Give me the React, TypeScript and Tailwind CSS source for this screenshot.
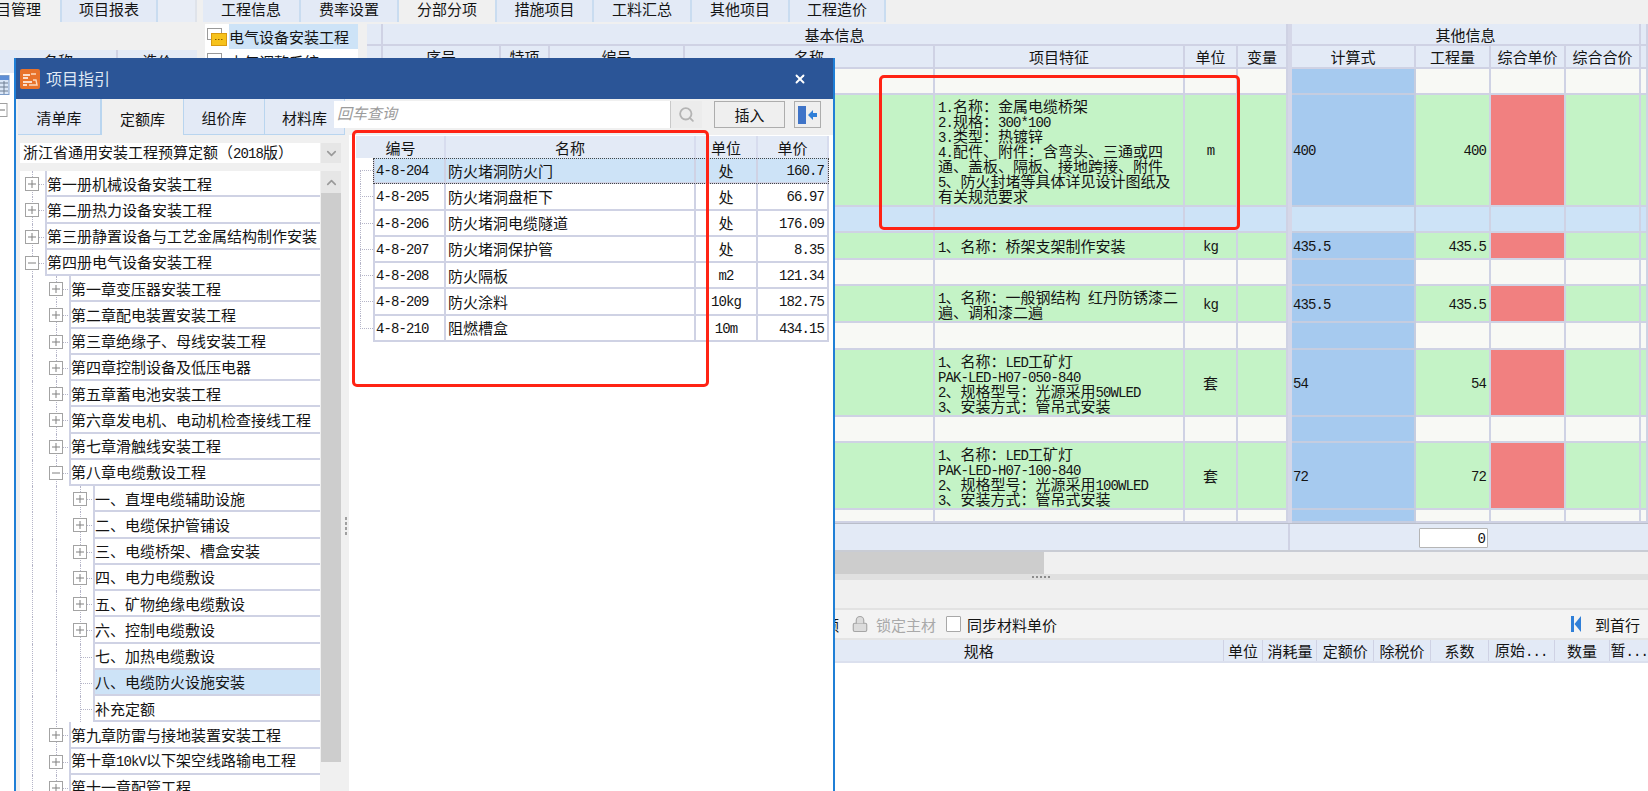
import { Lock, Search, X, ChevronDown, ChevronUp } from 'lucide-react';

const COLS = 'grid grid-cols-[16px_118px_49px_135px_250px_250px_53px_50px_4px_124px_75px_75px_75px_7px]';
const LINE = 'border-[#cfd2e4]';

// digits and latin are half width in the original font, so they get their own run
function T({ children }: { children: string }) {
  const parts = children.split(/([\x20-\x7e]+)/);
  return (
    <span>
      {parts.map((p, i) =>
        /^[\x20-\x7e]+$/.test(p) ? (
          <span key={i} className="font-['Liberation_Mono',monospace] text-[14px] tracking-[-0.9px]">
            {p}
          </span>
        ) : (
          p
        ),
      )}
    </span>
  );
}

interface Row {
  h: string;
  kind: 'white' | 'green' | 'sel';
  lines?: string[];
  unit?: string;
  calc?: string;
}

const rows: Row[] = [
  { h: 'h-[26px]', kind: 'white' },
  {
    h: 'h-[112px]',
    kind: 'green',
    lines: [
      '1.名称：金属电缆桥架',
      '2.规格：300*100',
      '3.类型：热镀锌',
      '4.配件、附件：含弯头、三通或四',
      '通、盖板、隔板、接地跨接、附件',
      '5、防火封堵等具体详见设计图纸及',
      '有关规范要求',
    ],
    unit: 'm',
    calc: '400',
  },
  { h: 'h-[26px]', kind: 'sel' },
  { h: 'h-[27px]', kind: 'green', lines: ['1、名称：桥架支架制作安装'], unit: 'kg', calc: '435.5' },
  { h: 'h-[26px]', kind: 'white' },
  {
    h: 'h-[37px]',
    kind: 'green',
    lines: ['1、名称：一般钢结构 红丹防锈漆二', '遍、调和漆二遍'],
    unit: 'kg',
    calc: '435.5',
  },
  { h: 'h-[27px]', kind: 'white' },
  {
    h: 'h-[67px]',
    kind: 'green',
    lines: ['1、名称：LED工矿灯', 'PAK-LED-H07-050-840', '2、规格型号：光源采用50WLED', '3、安装方式：管吊式安装'],
    unit: '套',
    calc: '54',
  },
  { h: 'h-[26px]', kind: 'white' },
  {
    h: 'h-[67px]',
    kind: 'green',
    lines: ['1、名称：LED工矿灯', 'PAK-LED-H07-100-840', '2、规格型号：光源采用100WLED', '3、安装方式：管吊式安装'],
    unit: '套',
    calc: '72',
  },
  { h: 'h-[13px]', kind: 'white' },
];

function GridRow({ row }: { row: Row }) {
  const bg = row.kind === 'green' ? 'bg-[#c4f3c6]' : row.kind === 'sel' ? 'bg-[#cde3f7]' : 'bg-[#f8f9f5]';
  const cell = `border-r-2 border-b-2 ${LINE} ${bg}`;
  const calcBg = row.kind === 'sel' ? 'bg-[#cde3f7]' : 'bg-[#a6caef]';
  const priceBg = row.kind === 'green' ? 'bg-[#f18080]' : bg;
  return (
    <div className={`${COLS} ${row.h}`}>
      <div className={cell} />
      <div className={cell} />
      <div className={cell} />
      <div className={cell} />
      <div className={cell} />
      <div className={`${cell} flex flex-col justify-center pl-[3px] whitespace-nowrap`}>
        {row.lines?.map((l) => (
          <div key={l} className="h-[15px] leading-[15px]">
            <T>{l}</T>
          </div>
        ))}
      </div>
      <div className={`${cell} flex items-center justify-center`}>{row.unit && <T>{row.unit}</T>}</div>
      <div className={cell} />
      <div className="bg-[#d5d7e8]" />
      <div className={`border-r-2 border-b-2 border-[#c5cde0] ${calcBg} flex items-center pl-[1px]`}>
        {row.calc && <T>{row.calc}</T>}
      </div>
      <div className={`${cell} flex items-center justify-end pr-[3px]`}>{row.calc && <T>{row.calc}</T>}</div>
      <div className={`border-r-2 border-b-2 ${LINE} ${priceBg}`} />
      <div className={cell} />
      <div className={cell} />
    </div>
  );
}

function TopTab({ label, active, w }: { label: string; active?: boolean; w: string }) {
  return (
    <div
      className={`${w} h-[22px] pb-[6px] flex items-center justify-center border-r-2 border-[#c9dcf0] ${
        active ? 'bg-[#f0f0f0]' : 'bg-[#e3eaf6]'
      }`}
    >
      {label}
    </div>
  );
}

function HeadCell({ label, className = '' }: { label?: string; className?: string }) {
  return (
    <div className={`bg-[#e3eaf6] border-r-2 border-b-2 ${LINE} flex items-center justify-center whitespace-nowrap ${className}`}>
      {label}
    </div>
  );
}

function Background() {
  return (
    <div className="flex h-full bg-[#f0f0f0]">
      {/* far left panel, mostly under the dialog */}
      <div className="w-[197px] shrink-0 flex flex-col">
        <div className="flex h-[22px]">
          <div className="w-[62px] pb-[6px] pr-[19px] flex items-center justify-end whitespace-nowrap bg-[#f0f0f0] border-r-2 border-[#c9dcf0]">
            项目管理
          </div>
          <TopTab label="项目报表" w="w-[96px]" />
          <div className="flex-1 bg-[#e8edf6] border-r-2 border-[#dfe3ea]" />
        </div>
        <div className="h-[28px] bg-[#f0f0f0]" />
        <div className="h-[23px] flex bg-[#e3eaf6]">
          <div className="w-[118px] pt-[3px] text-center border-r-2 border-[#cfd2e4]">名称</div>
          <div className="flex-1 pt-[3px] text-center">造价</div>
        </div>
        <div className="flex-1 bg-white pt-[2px] flex flex-col gap-[8px]">
          <svg width="10" height="20" viewBox="0 0 10 20">
            <rect x="-8" y="0.5" width="17" height="19" fill="#dbe7f7" stroke="#7c9cc8" />
            <rect x="-8" y="1" width="17" height="4" fill="#5f8fd6" />
            <path d="M0 8h8M0 12h8M0 16h8M4 6v13" stroke="#6f7f93" strokeWidth="1" />
          </svg>
          <svg width="8" height="14" viewBox="0 0 8 14">
            <rect x="-6" y="0.5" width="13" height="13" fill="#fff" stroke="#a0a0a0" />
            <path d="M0 7h5" stroke="#707070" />
          </svg>
        </div>
      </div>

      <div className="flex-1 pl-[6px] flex flex-col min-w-0">
        <div className="flex h-[22px]">
          <TopTab label="工程信息" w="w-[98px]" />
          <TopTab label="费率设置" w="w-[98px]" />
          <TopTab label="分部分项" w="w-[98px]" active />
          <TopTab label="措施项目" w="w-[97px]" />
          <TopTab label="工料汇总" w="w-[98px]" />
          <TopTab label="其他项目" w="w-[98px]" />
          <TopTab label="工程造价" w="w-[96px]" />
        </div>

        <div className="flex pt-[2px] pl-[2px]">
          {/* project tree */}
          <div className="w-[153px] h-[550px] bg-white">
            <div className="flex h-[25px]">
              <svg width="24" height="25" viewBox="0 0 24 25">
                <rect x="2.5" y="4.5" width="14" height="11" fill="#fff" stroke="#9a9a9a" />
                <rect x="6.5" y="9.5" width="15" height="12" fill="#f6c21c" stroke="#d99a10" />
                <path d="M10 15.5h1.5M13 15.5h1.5M16 15.5h1.5" stroke="#8a5a00" />
              </svg>
              <div className="flex-1 bg-[#cde3f7] flex items-center whitespace-nowrap overflow-hidden">电气设备安装工程</div>
            </div>
            <div className="flex h-[25px]">
              <svg width="24" height="25" viewBox="0 0 24 25">
                <rect x="2.5" y="4.5" width="14" height="11" fill="#fff" stroke="#9a9a9a" />
              </svg>
              <div className="flex-1 flex items-center whitespace-nowrap overflow-hidden">电气调整系统</div>
            </div>
          </div>
          <div className="w-[9px]" />

          {/* main grid */}
          <div className="w-[1281px] flex flex-col">
            <div className={`${COLS} h-[22px]`}>
              <HeadCell />
              <HeadCell label="基本信息" className="col-span-7" />
              <div className="bg-[#d5d7e8]" />
              <HeadCell label="其他信息" className="col-span-4" />
              <HeadCell />
            </div>
            <div className={`${COLS} h-[23px]`}>
              <HeadCell />
              <HeadCell label="序号" />
              <HeadCell label="特项" />
              <HeadCell label="编号" />
              <HeadCell label="名称" />
              <HeadCell label="项目特征" />
              <HeadCell label="单位" />
              <HeadCell label="变量" />
              <div className="bg-[#d5d7e8]" />
              <HeadCell label="计算式" />
              <HeadCell label="工程量" />
              <HeadCell label="综合单价" />
              <HeadCell label="综合合价" />
              <HeadCell />
            </div>
            {rows.map((r, i) => (
              <GridRow key={i} row={r} />
            ))}
            <div className="h-[29px] flex bg-[#e3eaf6] border-t border-[#b9bdc9] border-b-2 border-b-[#c9ccd4]">
              <div className="w-[923px] border-r-2 border-[#cfd2e4]" />
              <div className="pl-[129px] pt-[4px]">
                <div className="w-[69px] h-[20px] bg-white border border-[#b5b5b5] rounded-[1px] flex items-center justify-end pr-[2px]">
                  <T>0</T>
                </div>
              </div>
            </div>
            <div className="h-[22px] flex">
              <div className="w-[677px] bg-[#cdcdcd]" />
              <div className="flex-1 bg-[#f0f0f0]" />
            </div>
          </div>
        </div>

        <div className="h-[6px] bg-[#e0e0e0] flex items-center gap-[2px] pl-[829px]">
          <span className="w-[2px] h-[2px] bg-[#8c8c8c]" />
          <span className="w-[2px] h-[2px] bg-[#8c8c8c]" />
          <span className="w-[2px] h-[2px] bg-[#8c8c8c]" />
          <span className="w-[2px] h-[2px] bg-[#8c8c8c]" />
          <span className="w-[2px] h-[2px] bg-[#8c8c8c]" />
        </div>
        <div className="h-[30px] bg-[#f0f0f0] border-b-2 border-[#e2e2e2]" />
        <div className="h-[30px] bg-[#f3f3f3] flex items-center pl-[621px] pr-[8px] border-b-2 border-[#e4e4e4]">
          <span>额</span>
          <Lock size={18} strokeWidth={1.5} className="ml-[12px] text-[#a5a5a5] fill-[#dcdcdc]" />
          <span className="ml-[7px] text-[#a9a9a9]">锁定主材</span>
          <span className="ml-[10px] w-[15px] h-[16px] bg-white border border-[#a8a8a8] rounded-[1px]" />
          <span className="ml-[6px]">同步材料单价</span>
          <svg width="10" height="16" viewBox="0 0 10 16" className="ml-auto">
            <rect x="0" y="0" width="3" height="16" fill="#2f7fd8" />
            <path d="M10 0v16L3.5 8z" fill="#2f7fd8" />
          </svg>
          <span className="ml-[14px]">到首行</span>
        </div>
        <div className="h-[23px] flex bg-[#e3eaf6] border-b-2 border-[#dbe0ee] whitespace-nowrap">
          <div className="w-[1022px] pl-[532px] flex items-center justify-center border-r border-[#cfd2e4]">规格</div>
          <div className="w-[40px] flex items-center justify-center border-r border-[#cfd2e4]">单位</div>
          <div className="w-[54px] flex items-center justify-center border-r border-[#cfd2e4]">消耗量</div>
          <div className="w-[57px] flex items-center justify-center border-r border-[#cfd2e4]">定额价</div>
          <div className="w-[57px] flex items-center justify-center border-r border-[#cfd2e4]">除税价</div>
          <div className="w-[58px] flex items-center justify-center border-r border-[#cfd2e4]">系数</div>
          <div className="w-[66px] flex items-center justify-center border-r border-[#cfd2e4]">
            <T>原始...</T>
          </div>
          <div className="w-[56px] flex items-center justify-center border-r border-[#cfd2e4]">数量</div>
          <div className="flex-1 flex items-center justify-center">
            <T>暂...</T>
          </div>
        </div>
        <div className="flex-1 bg-white" />
      </div>
    </div>
  );
}

interface TreeItem {
  label: string;
  level: number;
  box?: 'plus' | 'minus';
  selected?: boolean;
}

const tree: TreeItem[] = [
  { label: '第一册机械设备安装工程', level: 0, box: 'plus' },
  { label: '第二册热力设备安装工程', level: 0, box: 'plus' },
  { label: '第三册静置设备与工艺金属结构制作安装', level: 0, box: 'plus' },
  { label: '第四册电气设备安装工程', level: 0, box: 'minus' },
  { label: '第一章变压器安装工程', level: 1, box: 'plus' },
  { label: '第二章配电装置安装工程', level: 1, box: 'plus' },
  { label: '第三章绝缘子、母线安装工程', level: 1, box: 'plus' },
  { label: '第四章控制设备及低压电器', level: 1, box: 'plus' },
  { label: '第五章蓄电池安装工程', level: 1, box: 'plus' },
  { label: '第六章发电机、电动机检查接线工程', level: 1, box: 'plus' },
  { label: '第七章滑触线安装工程', level: 1, box: 'plus' },
  { label: '第八章电缆敷设工程', level: 1, box: 'minus' },
  { label: '一、直埋电缆辅助设施', level: 2, box: 'plus' },
  { label: '二、电缆保护管铺设', level: 2, box: 'plus' },
  { label: '三、电缆桥架、槽盒安装', level: 2, box: 'plus' },
  { label: '四、电力电缆敷设', level: 2, box: 'plus' },
  { label: '五、矿物绝缘电缆敷设', level: 2, box: 'plus' },
  { label: '六、控制电缆敷设', level: 2, box: 'plus' },
  { label: '七、加热电缆敷设', level: 2 },
  { label: '八、电缆防火设施安装', level: 2, selected: true },
  { label: '补充定额', level: 2 },
  { label: '第九章防雷与接地装置安装工程', level: 1, box: 'plus' },
  { label: '第十章10kV以下架空线路输电工程', level: 1, box: 'plus' },
  { label: '第十一章配管工程', level: 1, box: 'plus' },
];

function ExpandBox({ kind }: { kind: 'plus' | 'minus' }) {
  return (
    <svg width="14" height="14" viewBox="0 0 14 14" className="relative bg-white">
      <rect x="0.5" y="0.5" width="13" height="13" fill="#fff" stroke="#a3a3a3" />
      <path d="M3 7h8" stroke="#808080" />
      {kind === 'plus' && <path d="M7 3v8" stroke="#808080" />}
    </svg>
  );
}

function TreeRow({ item }: { item: TreeItem }) {
  const ancestors = Array.from({ length: item.level }, (_, i) => i);
  return (
    <div className="flex h-[26.25px] shrink-0">
      {ancestors.map((i) => (
        <div key={i} className="relative w-[24px] shrink-0">
          <div className="absolute left-[12px] top-0 bottom-0 border-l border-dotted border-[#b5b5c8]" />
        </div>
      ))}
      <div className="relative w-[24px] shrink-0 flex items-center pl-[5px]">
        <div className="absolute left-[12px] top-0 bottom-0 border-l border-dotted border-[#b5b5c8]" />
        <div className="absolute left-[12px] right-0 top-[13px] border-t border-dotted border-[#b5b5c8]" />
        {item.box && <ExpandBox kind={item.box} />}
      </div>
      <div
        className={`flex-1 min-w-0 ml-[1px] border-l-2 border-b-2 ${LINE} flex items-center whitespace-nowrap overflow-hidden ${
          item.selected ? 'bg-[#cde3f7]' : 'bg-white'
        }`}
      >
        <T>{item.label}</T>
      </div>
    </div>
  );
}

const quota = [
  { code: '4-8-204', name: '防火堵洞防火门', unit: '处', price: '160.7' },
  { code: '4-8-205', name: '防火堵洞盘柜下', unit: '处', price: '66.97' },
  { code: '4-8-206', name: '防火堵洞电缆隧道', unit: '处', price: '176.09' },
  { code: '4-8-207', name: '防火堵洞保护管', unit: '处', price: '8.35' },
  { code: '4-8-208', name: '防火隔板', unit: 'm2', price: '121.34' },
  { code: '4-8-209', name: '防火涂料', unit: '10kg', price: '182.75' },
  { code: '4-8-210', name: '阻燃槽盒', unit: '10m', price: '434.15' },
];

function DialogTab({ label, active, w }: { label: string; active?: boolean; w: string }) {
  return (
    <div
      className={`${w} h-[36px] pt-[2px] flex items-center justify-center border-r border-[#b9d5ef] ${
        active ? 'bg-[#f0f0f0] border-l border-l-[#b9d5ef]' : 'bg-[#e3eaf6] border-b border-b-[#b9d5ef]'
      }`}
    >
      {label}
    </div>
  );
}

function Dialog() {
  return (
    <div className="absolute left-[14px] top-[58px] w-[821px] h-[733px] flex flex-col bg-[#f0f0f0] border-x-2 border-[#1f7fd6] overflow-hidden">
      <div className="h-[41px] shrink-0 -mx-[2px] bg-[#2b5597] flex items-center pl-[6px] pr-[28px] text-[#dfe8f4]">
        <svg width="20" height="20" viewBox="0 0 20 20">
          <rect width="20" height="20" rx="2" fill="#e8722a" />
          <path d="M3 6h7M3 9h5M3 13h9M3 16h4" stroke="#fff" strokeWidth="1.4" />
          <path d="M11 5h5M9 16h8l-1-5h-3" stroke="#fbd9bd" strokeWidth="1.4" fill="none" />
        </svg>
        <span className="ml-[6px] text-[16px]">项目指引</span>
        <X size={14} strokeWidth={3.2} className="ml-auto text-white" />
      </div>

      {/* tabs and search bar */}
      <div className="h-[36px] shrink-0 flex">
        <div className="w-[2px]" />
        <DialogTab label="清单库" w="w-[83px]" />
        <DialogTab label="定额库" w="w-[83px]" active />
        <DialogTab label="组价库" w="w-[81px]" />
        <DialogTab label="材料库" w="w-[80px]" />
        <div className="relative -ml-[11px] mt-[2px] w-[336px] h-[27px] pb-[4px] bg-white flex items-center pl-[3px] italic text-[#9b9b9b]">
          回车查询
        </div>
        <div className="mt-[2px] w-[32px] h-[27px] bg-[#ececec] border-l border-[#c9c9c9] flex items-center justify-center">
          <Search size={17} strokeWidth={2.6} className="text-[#b4b4b4]" />
        </div>
        <div className="ml-[12px] mt-[2px] w-[71px] h-[27px] bg-[#efefef] border border-[#adadad] flex items-center justify-center">
          插入
        </div>
        <div className="ml-[9px] mt-[2px] w-[27px] h-[27px] bg-[#efefef] border border-[#adadad] flex items-center pl-[3px]">
          <svg width="20" height="18" viewBox="0 0 20 18">
            <rect x="0" y="0" width="8" height="18" fill="#3f74c8" />
            <path d="M10 9l5-5v3h4v4h-4v3z" fill="#2f7fd8" />
          </svg>
        </div>
      </div>

      <div className="flex-1 flex min-h-0">
        {/* library tree */}
        <div className="w-[327px] shrink-0 flex flex-col pl-[4px] pr-[2px]">
          <div className="h-[36px] shrink-0 pt-[8px] flex">
            <div className="flex-1 h-[20px] bg-white flex items-center pl-[3px] whitespace-nowrap overflow-hidden">
              <T>浙江省通用安装工程预算定额（2018版）</T>
            </div>
            <div className="ml-[1px] w-[20px] h-[20px] bg-[#e6e6e6] flex items-center justify-center">
              <ChevronDown size={15} strokeWidth={2.6} className="text-[#9a9a9a]" />
            </div>
          </div>
          <div className="flex-1 flex min-h-0">
            <div className="w-[300px] flex flex-col bg-white overflow-hidden">
              {tree.map((t) => (
                <TreeRow key={t.label} item={t} />
              ))}
            </div>
            <div className="flex-1 ml-[1px] flex flex-col">
              <div className="h-[22px] bg-[#e6e6e6] flex items-center justify-center">
                <ChevronUp size={15} strokeWidth={2.6} className="text-[#9a9a9a]" />
              </div>
              <div className="h-[569px] bg-[#cdcdcd]" />
              <div className="flex-1 bg-[#f0f0f0]" />
            </div>
          </div>
        </div>

        {/* sash */}
        <div className="w-[6px] shrink-0 flex flex-col items-center justify-center gap-[2px] mb-[-125px]">
          <span className="w-[2px] h-[3px] bg-[#a0a0a0]" />
          <span className="w-[2px] h-[3px] bg-[#a0a0a0]" />
          <span className="w-[2px] h-[3px] bg-[#a0a0a0]" />
          <span className="w-[2px] h-[3px] bg-[#a0a0a0]" />
        </div>

        {/* quota list */}
        <div className="flex-1 bg-white pl-[7px] pt-[1px]">
          <div className="w-[473px] h-[22px] grid grid-cols-[17px_73px_250px_62px_71px]">
            <div className="bg-[#e3eaf6]" />
            <div className="bg-[#e3eaf6] border-r-2 border-[#d7dcee] flex items-center justify-center pr-[16px]">编号</div>
            <div className="bg-[#e3eaf6] border-r-2 border-[#d7dcee] flex items-center justify-center">名称</div>
            <div className="bg-[#e3eaf6] border-r-2 border-[#d7dcee] flex items-center justify-center">单位</div>
            <div className="bg-[#e3eaf6] border-r-2 border-[#d7dcee] flex items-center justify-center">单价</div>
          </div>
          {quota.map((q, i) => {
            const last = i === quota.length - 1;
            const cell = `border-r-2 border-b-2 ${LINE} flex items-center`;
            return (
              <div key={q.code} className="w-[473px] h-[26.25px] flex">
                <div className="relative w-[17px] shrink-0">
                  <div
                    className={`absolute left-[4px] border-l border-dotted border-[#b5b5c8] ${i === 0 ? 'top-[12px]' : 'top-0'} ${
                      last ? 'h-[13px]' : 'bottom-0'
                    }`}
                  />
                  <div className="absolute left-[4px] right-0 top-[12px] border-t border-dotted border-[#b5b5c8]" />
                </div>
                <div
                  className={`flex-1 grid grid-cols-[73px_250px_62px_71px] ${
                    i === 0 ? 'bg-[#cde3f7] outline outline-1 outline-dotted outline-[#444] -outline-offset-1' : 'bg-white'
                  }`}
                >
                  <div className={`${cell} border-l-2 pl-[1px]`}>
                    <T>{q.code}</T>
                  </div>
                  <div className={`${cell} pl-[2px] whitespace-nowrap`}>{q.name}</div>
                  <div className={`${cell} justify-center`}>
                    <T>{q.unit}</T>
                  </div>
                  <div className={`${cell} justify-end pr-[3px]`}>
                    <T>{q.price}</T>
                  </div>
                </div>
              </div>
            );
          })}
        </div>
      </div>
    </div>
  );
}

export default function App() {
  return (
    <div className="relative w-[1648px] h-[791px] overflow-hidden bg-white text-[#141414] text-[15px] leading-[15px] font-['Noto_Sans_CJK_SC','Liberation_Sans',sans-serif]">
      <Background />
      <Dialog />
      {/* red markup drawn over the screenshot */}
      <div className="absolute left-[352px] top-[130px] w-[357px] h-[257px] border-[3px] border-[#ff2314] rounded-[5px]" />
      <div className="absolute left-[879px] top-[75px] w-[361px] h-[155px] border-[3px] border-[#ff2314] rounded-[5px]" />
    </div>
  );
}
